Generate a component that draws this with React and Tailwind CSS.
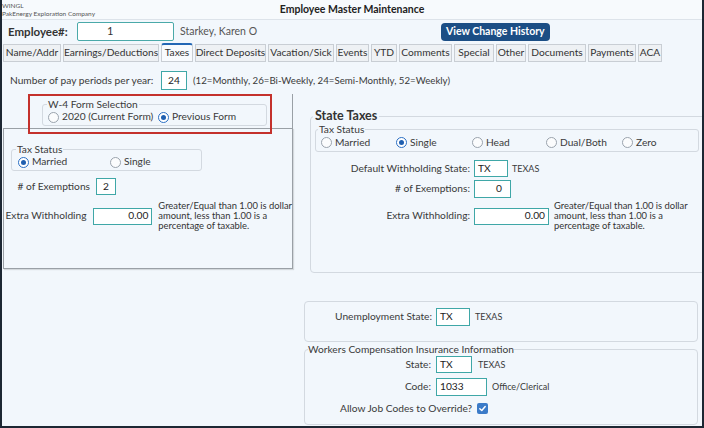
import React from "react";

const tabs = [
  ["Name/Addr", "w-[58px]"],
  ["Earnings/Deductions", "w-[96px]"],
  ["Taxes", "w-[32px]"],
  ["Direct Deposits", "w-[71px]"],
  ["Vacation/Sick", "w-[66px]"],
  ["Events", "w-[33px]"],
  ["YTD", "w-[26px]"],
  ["Comments", "w-[53px]"],
  ["Special", "w-[40px]"],
  ["Other", "w-[30px]"],
  ["Documents", "w-[58px]"],
  ["Payments", "w-[48px]"],
  ["ACA", "w-[24px]"],
];

const Radio = ({ checked, label, className = "" }) => (
  <div className={"flex items-center gap-[3px] " + className}>
    <span
      className={
        checked
          ? "w-[11px] h-[11px] rounded-full border-[1.5px] border-[#2a6fc4] bg-white flex items-center justify-center"
          : "w-[11px] h-[11px] rounded-full border border-[#9aa3ad] bg-[#fbfcfd]"
      }
    >
      {checked && <span className="w-[5px] h-[5px] rounded-full bg-[#1f5fb0]" />}
    </span>
    <span>{label}</span>
  </div>
);

const Field = ({ className = "", align = "left", children }) => (
  <div
    className={
      "border border-[#3fa7a7] bg-white px-[3px] flex items-center text-[#222] " +
      (align === "right" ? "justify-end " : "") +
      className
    }
  >
    {children}
  </div>
);

const Note = ({ className = "" }) => (
  <div className={"text-[9.4px] leading-[10px] text-[#333] " + className}>
    Greater/Equal than 1.00 is dollar
    <br />
    amount, less than 1.00 is a
    <br />
    percentage of taxable.
  </div>
);

export default function App() {
  return (
    <div className="w-[704px] h-[428px] overflow-hidden whitespace-nowrap bg-[#f2f7fc] border-x-2 border-b-2 border-[#1d2733] font-['Lato',sans-serif] text-[10.2px] text-[#3a3a3a]">
      {/* title bar */}
      <div className="h-[20px] grid grid-cols-[1fr_auto_1fr] items-center bg-[#f7fafd] border-b border-[#dde3ea]">
        <div className="text-[6.5px] leading-[8px] text-[#555]">
          <div>WINGL</div>
          <div>PakEnergy Exploration Company</div>
        </div>
        <div className="font-bold text-[10.5px] text-[#222]">Employee Master Maintenance</div>
        <div />
      </div>

      {/* employee row */}
      <div className="h-[23px] flex items-center">
        <span className="ml-[6px] w-[69px] font-bold text-[11.5px] text-[#333]">Employee#:</span>
        <div className="w-[97px] h-[19px] border border-[#4aa9a9] bg-white rounded-[2px] flex items-center pl-[29px] text-[11px] text-[#333]">
          1
        </div>
        <span className="ml-[6px] w-[261px] text-[10.5px] text-[#555]">Starkey, Karen O</span>
        <button className="h-[18px] px-[5px] rounded-[4px] bg-[#1b4e85] text-white font-bold text-[10.5px] leading-none">
          View Change History
        </button>
      </div>

      {/* tabs */}
      <div className="h-[19px] flex items-end gap-[2px] pl-[1px]">
        {tabs.map(([name, w]) =>
          name === "Taxes" ? (
            <div
              key={name}
              className={w + " h-[19px] flex items-center justify-center bg-[#f8fbfe] border border-[#c9ced4] border-t-2 border-t-[#2367b5] rounded-t-[3px] text-[#333]"}
            >
              {name}
            </div>
          ) : (
            <div
              key={name}
              className={w + " h-[18px] flex items-center justify-center bg-[#eef1f4] border border-[#c9ced4] text-[#333]"}
            >
              {name}
            </div>
          )
        )}
      </div>

      {/* pay periods */}
      <div className="mt-[9px] h-[19px] flex items-center pl-[8px]">
        <span className="w-[151px]">Number of pay periods per year:</span>
        <Field className="w-[26px] h-[19px] justify-center">24</Field>
        <span className="ml-[6px] text-[9.7px]">(12=Monthly, 26=Bi-Weekly, 24=Semi-Monthly, 52=Weekly)</span>
      </div>

      <div className="mt-[4px] flex">
        {/* federal column */}
        <div className="ml-[1px] w-[290px] shrink-0">
          <div className="mt-[3px] h-[34px] border-r border-[#9aa0a6]">
            <div className="ml-[25px] -mt-[3px] w-[244px] h-[40px] border-2 border-[#c4312c] relative z-10">
              <fieldset className="ml-[12px] mt-[2px] w-[225px] h-[28px] border border-[#d3d9e0] rounded-[3px]">
                <legend className="ml-[4px] px-[1px] leading-[12px]">W-4 Form Selection</legend>
                <div className="flex items-center h-[14px] pl-[5px]">
                  <Radio label="2020 (Current Form)" className="w-[110px]" />
                  <Radio checked label="Previous Form" />
                </div>
              </fieldset>
            </div>
          </div>
          <div className="h-[141px] border border-[#9aa0a6] shadow-[1px_1px_1px_rgba(0,0,0,0.12)]">
            <fieldset className="ml-[7px] mt-[14px] w-[191px] h-[28px] border border-[#d3d9e0] rounded-[3px]">
              <legend className="ml-[4px] px-[1px] leading-[12px]">Tax Status</legend>
              <div className="flex items-center h-[14px] pl-[6px]">
                <Radio checked label="Married" className="w-[92px]" />
                <Radio label="Single" />
              </div>
            </fieldset>
            <div className="mt-[7px] flex items-center">
              <span className="w-[86px] text-right">#&nbsp;of Exemptions</span>
              <Field className="ml-[6px] w-[20px] h-[17px] justify-center">2</Field>
            </div>
            <div className="mt-[6px] flex items-center">
              <span className="w-[86px] text-right">Extra Withholding</span>
              <Field align="right" className="ml-[6px] w-[62px] h-[17px]">0.00</Field>
              <Note className="ml-[6px]" />
            </div>
          </div>
        </div>

        {/* state column */}
        <div className="flex-1 min-w-0">
          <fieldset className="ml-[17px] mt-[15px] w-[400px] h-[164px] border border-[#d3d9e0] rounded-[4px]">
            <legend className="ml-[2px] px-[2px] font-bold text-[12.5px] leading-[14px] text-[#333]">State Taxes</legend>
            <fieldset className="ml-[4px] w-[384px] h-[29px] border border-[#d3d9e0] rounded-[3px]">
              <legend className="ml-[2px] px-[1px] leading-[12px]">Tax Status</legend>
              <div className="flex items-center h-[16px] pl-[5px]">
                <Radio label="Married" className="w-[75px]" />
                <Radio checked label="Single" className="w-[76px]" />
                <Radio label="Head" className="w-[74px]" />
                <Radio label="Dual/Both" className="w-[76px]" />
                <Radio label="Zero" />
              </div>
            </fieldset>
            <div className="mt-[8px] flex items-center">
              <span className="w-[159px] text-right">Default Withholding State:</span>
              <Field className="ml-[4px] w-[34px] h-[17px]">TX</Field>
              <span className="ml-[4px] text-[9px]">TEXAS</span>
            </div>
            <div className="mt-[3px] flex items-center">
              <span className="w-[159px] text-right">#&nbsp;of Exemptions:</span>
              <Field align="right" className="ml-[4px] w-[37px] h-[18px] pr-[8px]">0</Field>
            </div>
            <div className="mt-[3px] flex items-center">
              <span className="w-[159px] text-right">Extra Withholding:</span>
              <Field align="right" className="ml-[4px] w-[75px] h-[17px]">0.00</Field>
              <Note className="ml-[5px]" />
            </div>
          </fieldset>

          <div className="ml-[11px] mt-[28px] w-[394px] h-[41px] border border-[#d3d9e0] rounded-[4px] pt-[6px]">
            <div className="flex items-center">
              <span className="w-[127px] text-right">Unemployment State:</span>
              <Field className="ml-[4px] w-[34px] h-[18px]">TX</Field>
              <span className="ml-[5px] text-[9px]">TEXAS</span>
            </div>
          </div>

          <fieldset className="ml-[11px] mt-[1px] w-[394px] h-[82px] border border-[#d3d9e0] rounded-[4px]">
            <legend className="ml-[3px] leading-[12px]">Workers Compensation Insurance Information</legend>
            <div className="mt-[1px] flex items-center">
              <span className="w-[126px] text-right">State:</span>
              <Field className="ml-[5px] w-[36px] h-[17px]">TX</Field>
              <span className="ml-[6px] text-[9px]">TEXAS</span>
            </div>
            <div className="mt-[5px] flex items-center">
              <span className="w-[126px] text-right">Code:</span>
              <Field className="ml-[5px] w-[51px] h-[18px]">1033</Field>
              <span className="ml-[5px] text-[9px]">Office/Clerical</span>
            </div>
            <div className="mt-[5px] flex items-center">
              <span className="ml-[35px]">Allow Job Codes to Override?</span>
              <span className="ml-[5px] w-[11px] h-[11px] rounded-[2px] bg-[#3b7bc8] flex items-center justify-center">
                <svg width="9" height="9" viewBox="0 0 10 10">
                  <path d="M2 5.2 L4.2 7.3 L8 2.8" fill="none" stroke="white" strokeWidth="1.6" strokeLinecap="round" strokeLinejoin="round" />
                </svg>
              </span>
            </div>
          </fieldset>
        </div>
      </div>
    </div>
  );
}
